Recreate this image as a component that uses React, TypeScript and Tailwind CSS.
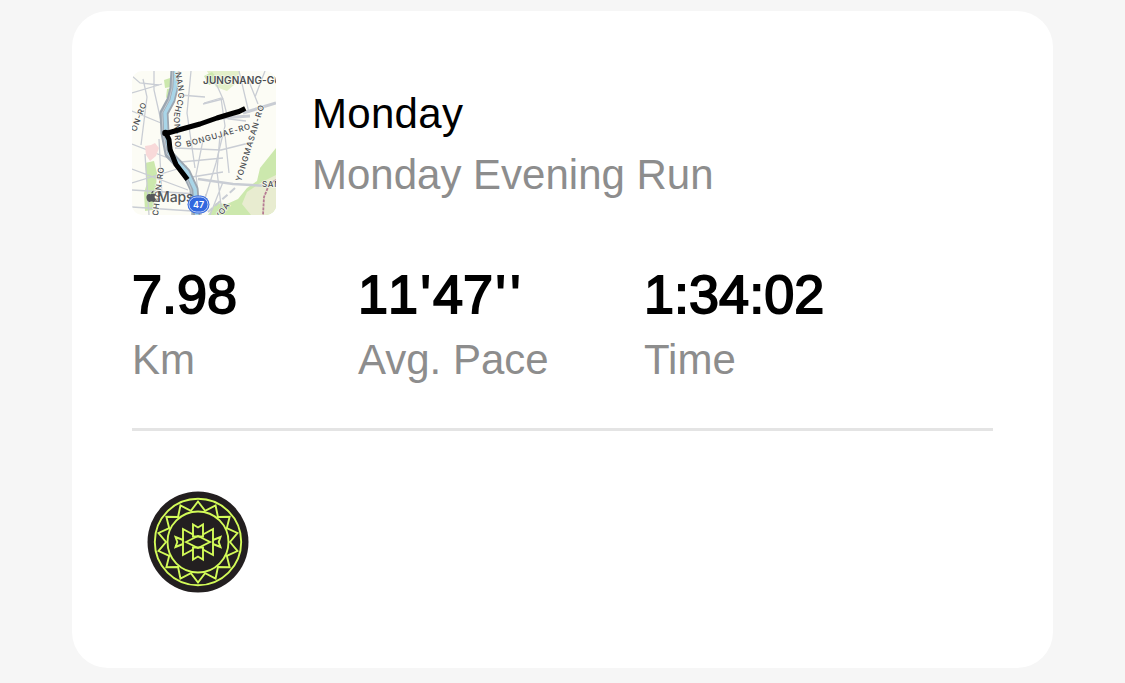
const stats = [
  { label: "Km", value: "7.98", width: "w-[226px]" },
  { label: "Avg. Pace", value: "11'47''", width: "w-[286px]" },
  { label: "Time", value: "1:34:02", width: "w-[220px]" },
];

function RouteMap() {
  return (
    <svg
      viewBox="0 0 144 144"
      className="size-36 shrink-0 rounded-[10px] bg-[#fcfcf5]"
      fontFamily="Inter, 'Liberation Sans', sans-serif"
    >
      {/* parks and hills */}
      <g fill="#cce8ad">
        <path d="M75 0h33l-5 13-8 7-11-4z" fill="#e3efc9" />
        <path d="M72 5l8-4 8 9-11 4z" />
        <path d="M32 9l6-2 1 9-6 1zM35 18l5-1-1 8-5 2z" />
        <path d="M13 92l9-2 3 12-1 15-3 22-8 1-1-18 3-10z" />
        <path d="M144 77l-8 10-8 10-3 13-10 7-9 11-11 5-11-1-8 12h68z" />
        <path d="M144 104l-14 7-15 10-5 12 9 11h25z" fill="#e8ecd0" />
      </g>
      {/* streets */}
      <g fill="none" stroke="#c9cdd4" strokeWidth="1.3">
        <path d="M0 22l30-9M0 40l29 12M11 8l4 18-6 48M0 5l8 7 19 2M22 0v19l7 31M48 24l25 2M59 0l-4 42 8 55M72 32l17-5 4 28-9 37-16 52" />
        <path d="M91 28l5 20 18 2M71 69l-7 35 4 36M0 73l36 14M43 77l46 2 28-7M49 91l42-4M60 106l31-5M0 112l55-17M0 119l66 4M0 98l56 21M0 136l60 4M27 68l3 58M13 83l4 61M88 64l-3 36 5 43M107 0l10 42M116 8l10 25M83 10l8 18-20 5M74 123l-5 21M91 111l-13 33M97 102l-4-38M133 0l-10 26" />
        <path d="M111 42l33-10M89 47l29-2" strokeWidth="3" />
        <path d="M66 108l35 5 35 2" strokeWidth="2.5" />
        <path d="M103 117L76 141" strokeWidth="2" strokeDasharray="7 3" />
      </g>
      <path d="M13 75l6-1 4-2 4 5-3 8-6 5-4-6z" fill="#f8d9d9" />
      <g fill="none" strokeLinejoin="round">
        <path d="M43-2l-1 19-3 12-7 13 1 20 4 21 17 18 8 17 2 28" stroke="#9ba6b1" strokeWidth="9" />
        <path d="M44-2l-1 19-3 12-7 13 1 20 4 21 17 18 8 17 2 28" stroke="#a9d5e8" strokeWidth="3.5" />
        <path d="M41-2l-1 19-3 12-7 13 1 20 4 21 17 18 7 17 1 28" stroke="#c1c9d0" strokeWidth="1" />
        <path d="M144 109l-7 5-5 12-1 18" stroke="#b67b93" strokeWidth="1.8" strokeDasharray="3 1" />
      </g>
      {/* street names */}
      <path id="river-road" d="M42-5L46 18C48 30 41 38 42 50L44 90" fill="none" />
      <g fill="#4a4d51" fontSize="8" fontWeight="500" letterSpacing=".7" stroke="#fcfcf5" strokeWidth="1.2" paintOrder="stroke">
        <text x="71" y="12.5" fontSize="10" fontWeight="600" letterSpacing=".1">JUNGNANG-GU</text>
        <text transform="translate(4 61) rotate(-69)">ON-RO</text>
        <text>
          <textPath href="#river-road">GNANGCHEON-RO</textPath>
        </text>
        <text transform="translate(55 76) rotate(-16)">BONGUJAE-RO</text>
        <text transform="translate(109 111) rotate(-73)" letterSpacing="1">YONGMASAN-RO</text>
        <text transform="translate(26 145) rotate(-83)">CHEON-RO</text>
        <text transform="translate(87 149) rotate(-53)">YOA</text>
        <text x="130" y="116">SAM</text>
      </g>
      <path
        d="M111 38.500l-4 2-7 2-15 4.500-17 6-18 5-16 4.500 3 6 1 10 6 15 10 13"
        fill="none"
        stroke="#000"
        strokeWidth="5"
        strokeLinecap="square"
        strokeLinejoin="round"
      />
      <circle cx="33.500" cy="62" r="3.300" />
      {/* map provider mark */}
      <g fill="#55585b">
        <path d="M22.700 123.100c-.8-.4-2-.3-2.900 0-.8.2-1.100.2-1.900-.1-2-.6-3.700 1.200-3.500 3.800.2 2.100 1.600 4.200 2.900 4.200.8 0 1.200-.5 2.200-.5s1.300.5 2.100.5c1.200 0 2.100-1.700 2.500-2.900-2-.9-2-3.700-.1-4.600zM19.200 122.500c0-1.500 1-2.500 2.400-2.800.1 1.500-1 2.800-2.400 2.800z" />
        <text x="25" y="131" fontSize="14" fontWeight="500" letterSpacing="-.1">Maps</text>
      </g>
      <rect x="55.500" y="124.500" width="22" height="18" rx="9" fill="#3268df" />
      <rect x="57" y="126" width="19" height="15" rx="7.500" fill="none" stroke="#fff" strokeWidth=".7" />
      <text x="66.500" y="137" textAnchor="middle" fontSize="9" fontWeight="600" fill="#fff">47</text>
    </svg>
  );
}

// 14 triangles between the two rings of the badge
const zigzag = Array.from({ length: 28 }, (_, i) => {
  const angle = (i * Math.PI) / 14 - Math.PI / 2;
  const r = i % 2 === 0 ? 40.5 : 32;
  return `${(54 + r * Math.cos(angle)).toFixed(2)},${(54 + r * Math.sin(angle)).toFixed(2)}`;
}).join(" ");

function Badge() {
  return (
    <svg viewBox="0 0 108 108" className="size-[108px]">
      <circle cx="54" cy="54" r="50.500" fill="#231f20" />
      <g fill="none" stroke="#d3fb58" strokeWidth="1.900">
        <circle cx="54" cy="54" r="43.200" />
        <circle cx="54" cy="54" r="30.500" />
        <polygon points={zigzag} />
        <path d="M42 54l12-6 12 6-12 6z" />
        <path d="M49 48.500V36.500l5 3 5-3v12zM49 59.500v12l5-3 5 3v-12z" />
        <path d="M49 46.500l-10-5.500v26l10-5.500M59 46.500l10-5.500v26l-10-5.500" />
        <path d="M39 52l-7.500-3 1.800 5-1.800 5 7.500-3M69 52l7.500-3-1.800 5 1.800 5-7.500-3" />
      </g>
    </svg>
  );
}

function StatValue({ value }: { value: string }) {
  return (
    <div className="h-[62px] text-[54px] leading-[62px] text-black [-webkit-text-stroke:1.8px_black] [font-kerning:none]">
      {value.split("").map((char, i) => (
        <span key={i} className={char === "'" ? "px-[2.3px]" : ""}>
          {char}
        </span>
      ))}
    </div>
  );
}

export default function App() {
  return (
    <div className="h-[683px] overflow-hidden bg-[#f6f6f6] pt-[11px] font-['Liberation_Sans',Arial,sans-serif]">
      <div className="ml-[72px] h-[657px] w-[981px] rounded-[36px] bg-white px-[60px] pt-[60px]">
        <div className="flex h-36 gap-9">
          <RouteMap />
          <div className="pt-3 text-[42px] leading-[61px]">
            <h1 className="tracking-[0.3px] text-black">Monday</h1>
            <p className="text-[#8d8d8d]">Monday Evening Run</p>
          </div>
        </div>

        <div className="mt-12 flex">
          {stats.map((stat) => (
            <div key={stat.label} className={stat.width}>
              <StatValue value={stat.value} />
              <div className="mt-1 text-[42px] leading-[62px] text-[#8d8d8d]">{stat.label}</div>
            </div>
          ))}
        </div>

        <div className="mt-[37px] h-[3px] bg-[#e4e4e4]" />

        <div className="mt-[57px] ml-3">
          <Badge />
        </div>
      </div>
    </div>
  );
}
